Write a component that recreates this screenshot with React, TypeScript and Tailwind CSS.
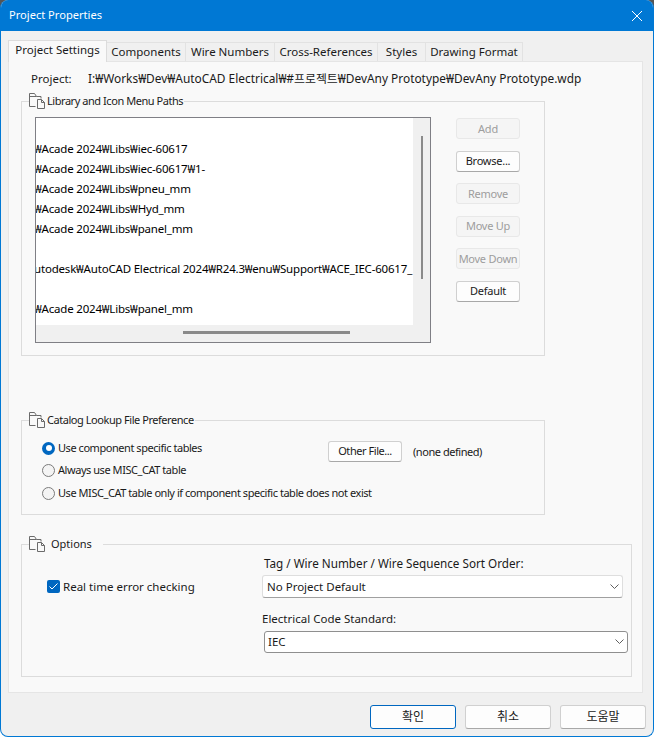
import { ReactNode } from "react";

const FolderIcon = () => (
  <svg width="17" height="16" viewBox="0 0 17 16" fill="none" stroke="#6b6b6b" strokeWidth="1" className="shrink-0">
    <path d="M6.500 13.500h-6V.5h5l2 3h4.500v2" />
    <path d="M.5 3.500h7" />
    <path d="M8.500 15.500h7V9.500l-3-3h-4z" fill="#f9f9f9" />
    <path d="M12.500 6.500v3h3" />
  </svg>
);

const Button = ({ label, disabled, className = "" }: { label: string; disabled?: boolean; className?: string }) => (
  <div
    className={`h-[21px] flex items-center justify-center whitespace-nowrap rounded-[3px] border ${
      disabled
        ? "bg-[#f5f5f5] border-[#e8e8e8] text-[#9d9d9d]"
        : "bg-[#fdfdfd] border-[#d0d0d0] border-b-[#a8a8a8] text-[#1a1a1a]"
    } ${className}`}
  >
    {label}
  </div>
);

const Radio = ({ label, checked, className = "" }: { label: string; checked?: boolean; className?: string }) => (
  <div className={`flex items-center gap-[3px] ${className}`}>
    {checked ? (
      <span className="w-[13px] h-[13px] shrink-0 rounded-full bg-[#0067c0] flex items-center justify-center">
        <span className="w-[6px] h-[6px] rounded-full bg-white" />
      </span>
    ) : (
      <span className="w-[13px] h-[13px] shrink-0 rounded-full border border-[#7b7b7b] bg-[#f4f4f4]" />
    )}
    <span className="whitespace-nowrap text-[11px] tracking-[-0.45px]">{label}</span>
  </div>
);

const Combo = ({ value, className = "" }: { value: string; className?: string }) => (
  <div className={`flex items-center justify-between bg-white rounded-[3px] text-[11.500px] ${className}`}>
    <span>{value}</span>
    <svg width="9" height="6" viewBox="0 0 9 6" fill="none" stroke="#5f5f5f" strokeWidth="1">
      <path d="M.5.5l4 4 4-4" />
    </svg>
  </div>
);

const Group = ({ title, gap, className, children }: { title: string; gap?: boolean; className: string; children: ReactNode }) => (
  <div className={`border border-[#dcdcdc] ${className}`}>
    <div
      className={`flex items-center h-[16px] mt-[-9px] ml-[7px] w-fit bg-[#f9f9f9] ${
        gap ? "gap-[5px] pr-[11px] text-[11px]" : "gap-px pr-px text-[11px] tracking-[-0.45px]"
      }`}
    >
      <FolderIcon />
      <span>{title}</span>
    </div>
    {children}
  </div>
);

const tabs = [
  { label: "Components", w: "w-[79px]" },
  { label: "Wire Numbers", w: "w-[89px]" },
  { label: "Cross-References", w: "w-[103px]" },
  { label: "Styles", w: "w-[48px]" },
  { label: "Drawing Format", w: "w-[97px]" },
];

const rows = [
  "",
  "₩Acade 2024₩Libs₩iec-60617",
  "₩Acade 2024₩Libs₩iec-60617₩1-",
  "₩Acade 2024₩Libs₩pneu_mm",
  "₩Acade 2024₩Libs₩Hyd_mm",
  "₩Acade 2024₩Libs₩panel_mm",
  "",
  "utodesk₩AutoCAD Electrical 2024₩R24.3₩enu₩Support₩ACE_IEC-60617_",
  "",
  "₩Acade 2024₩Libs₩panel_mm",
];

export default function App() {
  return (
    <div className="w-[654px] h-[737px] bg-linear-to-b from-[#555555] from-50% to-white to-50%">
      <div
        className="w-full h-full overflow-hidden bg-[#f0f0f0] flex flex-col text-[11.500px] text-[#1a1a1a] rounded-[8px] border-b border-x border-[#0078d4]"
        style={{ fontFamily: '"Noto Sans", "Noto Sans CJK KR", sans-serif' }}
      >
        {/* title bar */}
        <div className="h-[31px] shrink-0 bg-[#0078d4] text-white text-[11.100px] flex items-center justify-between pl-[9px] pr-[11px] mx-[-1px]">
          <span>Project Properties</span>
          <svg width="12" height="12" viewBox="0 0 12 12" stroke="#fff" strokeWidth="1">
            <path d="M1 1l10 10M11 1 1 11" />
          </svg>
        </div>

        <div className="px-[7px] pt-[9px] flex-1 flex flex-col">
          {/* tabs */}
          <div className="flex items-end h-[21px] relative z-10">
            <div className="w-[99px] h-[22px] mb-[-1px] pb-[3px] bg-[#f9f9f9] border border-b-0 border-[#dcdcdc] flex items-center justify-center">
              Project Settings
            </div>
            {tabs.map((t) => (
              <div key={t.label} className={`${t.w} h-[19px] border border-l-0 border-b-0 border-[#e2e2e2] flex items-center justify-center`}>
                {t.label}
              </div>
            ))}
          </div>

          {/* panel */}
          <div className="w-[635px] h-[632px] bg-[#f9f9f9] border border-[#e5e5e5] flex flex-col">
            <div className="flex h-[16px] items-center mt-[9px] ml-[22px]">
              <span className="w-[57px]">Project:</span>
              <span className="whitespace-nowrap text-[11.900px]">I:₩Works₩Dev₩AutoCAD Electrical₩#프로젝트₩DevAny Prototype₩DevAny Prototype.wdp</span>
            </div>

            <Group title="Library and Icon Menu Paths" className="w-[524px] h-[255px] ml-[12px] mt-[14px]">
              <div className="flex mt-[8px]">
                {/* list box */}
                <div className="w-[396px] h-[226px] ml-[13px] border border-[#7f7f85] bg-[#f0f0f0] flex flex-col">
                  <div className="flex flex-1 min-h-0">
                    <div className="w-[377px] h-[207px] bg-white overflow-hidden pt-[1px] text-[11.500px] tracking-[-0.19px] text-black">
                      {rows.map((r, i) => (
                        <div key={i} className="h-[20px] ml-[-2px] flex items-center whitespace-nowrap">
                          {r}
                        </div>
                      ))}
                    </div>
                    <div className="flex-1 flex justify-center pt-[18px]">
                      <div className="w-[2px] h-[143px] bg-[#8a8a8a]" />
                    </div>
                  </div>
                  <div className="h-[17px] pl-[147px] pt-[6px]">
                    <div className="w-[167px] h-[3px] bg-[#8a8a8a]" />
                  </div>
                </div>

                {/* side buttons */}
                <div className="w-[64px] ml-[25px] mt-[1.250px] flex flex-col gap-[11.500px] text-[11px] tracking-[-0.25px]">
                  <Button label="Add" disabled />
                  <Button label="Browse..." />
                  <Button label="Remove" disabled />
                  <Button label="Move Up" disabled />
                  <Button label="Move Down" disabled />
                  <Button label="Default" />
                </div>
              </div>
            </Group>

            <Group title="Catalog Lookup File Preference" className="w-[524px] h-[95px] ml-[12px] mt-[64px]">
              <div className="flex pl-[20px] pt-[5px]">
                <div className="w-[286px]">
                  <Radio label="Use component specific tables" checked className="h-[16px] mt-[7px]" />
                  <Radio label="Always use MISC_CAT table" className="h-[16px] mt-[6px]" />
                  <Radio label="Use MISC_CAT table only if component specific table does not exist" className="h-[16px] mt-[7px]" />
                </div>
                <div className="flex items-start mt-[8px] text-[11px] tracking-[-0.45px]">
                  <Button label="Other File..." className="w-[74px]" />
                  <span className="ml-[11px] leading-[21px]">(none defined)</span>
                </div>
              </div>
            </Group>

            <Group title="Options" gap className="w-[611px] h-[133px] ml-[12px] mt-[29px]">
              <div className="flex pt-[4px]">
                <div className="w-[240px] pl-[25px] pt-[22px] flex items-start gap-[3px]">
                  <span className="w-[13px] h-[13px] mt-[2px] rounded-[2px] bg-[#0067c0] flex items-center justify-center">
                    <svg width="9" height="7" viewBox="0 0 9 7" fill="none" stroke="#fff" strokeWidth="1">
                      <path d="M.5 3.500 3 6 8.500.5" />
                    </svg>
                  </span>
                  <span className="text-[11.500px]">Real time error checking</span>
                </div>
                <div className="flex flex-col">
                  <span className="ml-[2px] h-[16px] flex items-center text-[11.700px]">Tag / Wire Number / Wire Sequence Sort Order:</span>
                  <Combo value="No Project Default" className="w-[361px] h-[23px] mt-[3px] pl-[4px] pr-[3px] border border-[#dedede] border-b-[#a0a0a0]" />
                  <span className="h-[16px] flex items-center mt-[13px]">Electrical Code Standard:</span>
                  <Combo value="IEC" className="w-[364px] h-[22px] ml-[2px] mt-[4px] pl-[3px] pr-[3px] border border-[#8f8f8f]" />
                </div>
              </div>
            </Group>
          </div>

          {/* dialog buttons */}
          <div className="flex justify-end gap-[9px] mt-[12px] text-[12px]">
            <Button label="확인" className="w-[86px] !h-[24px] !border-[#0067c0]" />
            <Button label="취소" className="w-[86px] !h-[24px]" />
            <Button label="도움말" className="w-[86px] !h-[24px]" />
          </div>
        </div>
      </div>
    </div>
  );
}
